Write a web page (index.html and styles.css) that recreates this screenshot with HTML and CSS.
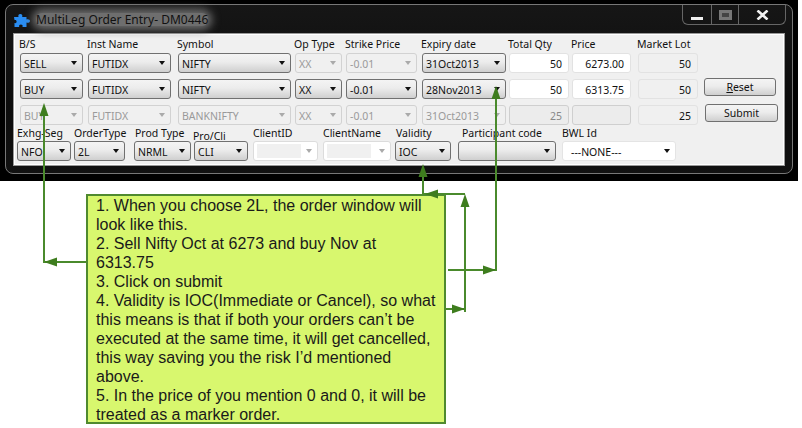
FILE: index.html
```html
<!DOCTYPE html>
<html lang="en">
<head>
    <meta charset="UTF-8">
    <title>MultiLeg Order Entry</title>
    <link rel="stylesheet" href="styles.css">
</head>
<body>
    <div class="stage">
        <div class="window">
            <div class="titlebar">
                <svg class="appicon" width="16" height="14" viewBox="0 0 16 14">
                    <path fill="#2a8df2" d="M0 3h4.500c-.6-1.800.3-3 1.800-3s2.600 1.200 1.900 3h4.300v2.600c1.800-.7 3.500.1 3.500 1.500s-1.700 2.200-3.500 1.500v4.400h-4c.5-1.600-.4-2.400-1.600-2.400s-2.200.8-1.700 2.400h-4.700v-3.900c1.200.5 2.100-.2 2.100-1.500s-.9-2-2.100-1.500z"/>
                </svg>
                <span class="wintitle">MultiLeg Order Entry- DM0446</span>
                <div class="winbtns">
                    <div class="winbtn minbtn"><span class="minbar"></span></div>
                    <div class="winbtn maxbtn"><span class="maxbox"></span></div>
                    <div class="winbtn closebtn">
                        <svg width="13" height="10" viewBox="0 0 13 10"><path d="M1.500 .5l10 9M11.500 .5l-10 9" stroke="#f2f2f2" stroke-width="2.600" fill="none"/></svg>
                    </div>
                </div>
            </div>

            <div class="panel">
                <div class="row labels">
                    <div class="c1">B/S</div>
                    <div class="c2">Inst Name</div>
                    <div class="c3">Symbol</div>
                    <div class="c4">Op Type</div>
                    <div class="c5">Strike Price</div>
                    <div class="c6">Expiry date</div>
                    <div class="c7">Total Qty</div>
                    <div class="c8">Price</div>
                    <div class="c9">Market Lot</div>
                </div>

                <div class="row">
                    <div class="sel c1">SELL<i></i></div>
                    <div class="sel c2">FUTIDX<i></i></div>
                    <div class="sel c3">NIFTY<i></i></div>
                    <div class="sel off c4">XX<i></i></div>
                    <div class="sel off c5">-0.01<i></i></div>
                    <div class="sel c6">31Oct2013<i></i></div>
                    <div class="num c7">50</div>
                    <div class="num c8">6273.00</div>
                    <div class="num lot c9">50</div>
                </div>

                <div class="row">
                    <div class="sel c1">BUY<i></i></div>
                    <div class="sel c2">FUTIDX<i></i></div>
                    <div class="sel c3">NIFTY<i></i></div>
                    <div class="sel c4">XX<i></i></div>
                    <div class="sel c5">-0.01<i></i></div>
                    <div class="sel c6">28Nov2013<i></i></div>
                    <div class="num c7">50</div>
                    <div class="num c8">6313.75</div>
                    <div class="num lot c9">50</div>
                    <button class="btn resetbtn"><u>R</u>eset</button>
                </div>

                <div class="row">
                    <div class="sel off c1">BUY<i></i></div>
                    <div class="sel off c2">FUTIDX<i></i></div>
                    <div class="sel off c3">BANKNIFTY<i></i></div>
                    <div class="sel off c4">XX<i></i></div>
                    <div class="sel off c5">-0.01<i></i></div>
                    <div class="sel off c6">31Oct2013<i></i></div>
                    <div class="num dis c7">25</div>
                    <div class="num dis c8"></div>
                    <div class="num lot c9">25</div>
                    <button class="btn submitbtn">Submit</button>
                </div>

                <div class="row lower">
                    <div class="field f1"><label>Exhg-Seg</label><div class="sel">NFO<i></i></div></div>
                    <div class="field f2"><label>OrderType</label><div class="sel">2L<i></i></div></div>
                    <div class="field f3"><label>Prod Type</label><div class="sel">NRML<i></i></div></div>
                    <div class="field f4"><label class="lowlabel">Pro/Cli</label><div class="sel">CLI<i></i></div></div>
                    <div class="field f5"><label>ClientID</label><div class="sel blank"><b></b><i></i></div></div>
                    <div class="field f6"><label>ClientName</label><div class="sel blank"><b></b><i></i></div></div>
                    <div class="field f7"><label>Validity</label><div class="sel">IOC<i></i></div></div>
                    <div class="field f8"><label>Participant code</label><div class="sel"><i></i></div></div>
                    <div class="field f9"><label>BWL Id</label><div class="sel white">---NONE---<i></i></div></div>
                </div>
            </div>
        </div>
    </div>

    <div class="note">
        1. When you choose 2L, the order window will look like this.<br>
        2. Sell Nifty Oct at 6273 and buy Nov at 6313.75<br>
        3. Click on submit<br>
        4. Validity is IOC(Immediate or Cancel), so what this means is that if both your orders can’t be executed at the same time, it will get cancelled, this way saving you the risk I’d mentioned above.<br>
        5. In the price of you mention 0 and 0, it will be treated as a marker order.
    </div>

    <!-- arrows drawn over the screenshot -->
    <svg class="arrows" width="802" height="428" viewBox="0 0 802 428">
        <g fill="none" stroke="#4a8a2c" stroke-width="2">
            <path d="M86 262H44V110"/>
            <path d="M448 270H496V92"/>
            <path d="M446 309H465M465 312V200"/>
            <path d="M465 194H423V172"/>
        </g>
        <g fill="#3e7d1e">
            <path d="M44 262l13-4.500v9z"/>
            <path d="M44 103l4.500 13h-9z"/>
            <path d="M496 86l4.500 13h-9z"/>
            <path d="M496 270l-13-4.500v9z"/>
            <path d="M465 194l4.500 13h-9z"/>
            <path d="M465 309l-13-4.500v9z"/>
            <path d="M425 194l13-4.500v9z"/>
            <path d="M423 164l4.500 13h-9z"/>
        </g>
    </svg>
</body>
</html>
```

FILE: styles.css
```css
html, body {
    margin: 0;
    height: 428px;
    overflow: hidden;
    background: #fff;
}

.stage {
    width: 798px;
    height: 181px;
    box-sizing: border-box;
    padding: 4px 0 7px 5px;
    background: #000;
    font-family: "Noto Sans", sans-serif;
    font-size: 10.500px;
    color: #111;
}

.window {
    width: 788px;
    height: 170px;
    box-sizing: border-box;
    border: 1px solid #777;
    border-radius: 8px;
    padding: 0 7px;
    background: linear-gradient(#161616, #0c0c0c 60%, #111);
}

.titlebar {
    height: 28px;
    display: flex;
    align-items: center;
}

.appicon {
    margin: 3px 6px 0 1px;
}

.wintitle {
    font-size: 12px;
    line-height: 13px;
    color: #111;
    margin-top: 1px;
    background: #6e6e6e;
    border-radius: 6px;
    box-shadow: 0 0 9px 4px #6e6e6e;
}

.winbtns {
    margin-left: auto;
    margin-right: -1px;
    align-self: flex-start;
    display: flex;
    height: 19px;
    border: 1px solid #666;
    border-top: none;
    border-radius: 0 0 6px 6px;
}

.winbtn {
    display: flex;
    align-items: center;
    justify-content: center;
    border-left: 1px solid #666;
}

.minbtn {
    width: 28px;
    border-left: none;
}

.maxbtn {
    width: 26px;
}

.closebtn {
    width: 46px;
}

.minbar {
    width: 12px;
    height: 3px;
    margin-top: 7px;
    background: #eee;
}

.maxbox {
    width: 7px;
    height: 4px;
    border: 3px solid #777;
    background: #444;
}

.panel {
    height: 133px;
    box-sizing: border-box;
    border: 1px solid #999;
    background: #f0f0f0;
    padding: 4px 0 0 6px;
    box-shadow: inset 0 0 0 1px #fff;
}

.row {
    display: flex;
    align-items: flex-start;
    margin-bottom: 6px;
}

.labels {
    height: 15px;
    line-height: 13px;
    margin-bottom: 0;
    margin-left: -1px;
}

.c1 { width: 63px; margin-right: 5px; }
.c2 { width: 83px; margin-right: 7px; }
.c3 { width: 113px; margin-right: 4px; }
.c4 { width: 47px; margin-right: 4px; }
.c5 { width: 71px; margin-right: 5px; }
.c6 { width: 84px; margin-right: 3px; }
.c7 { width: 60px; margin-right: 3px; }
.c8 { width: 59px; margin-right: 7px; }
.c9 { width: 60px; margin-right: 6px; }

.sel, .num {
    height: 20px;
    box-sizing: border-box;
    line-height: 20px;
    border-radius: 3px;
}

.sel {
    position: relative;
    padding-left: 3px;
    border: 1px solid #707070;
    background: linear-gradient(#f4f4f4, #ececec 45%, #cfcfcf);
    white-space: nowrap;
}

/* dropdown arrow */
.sel i {
    position: absolute;
    right: 5px;
    top: 7px;
    border-style: solid;
    border-width: 4px 3.500px 0;
    border-color: #111 transparent transparent;
}

.sel.off {
    border-color: #d2d2d2;
    background: #f0f0f0;
    color: #9a9a9a;
}

.sel.off i, .sel.blank i {
    border-top-color: #aaa;
}

.sel.blank {
    border-color: #dcdcdc;
    background: #fff;
}

.sel.blank b {
    display: block;
    width: 44px;
    height: 14px;
    margin-top: 2px;
    background: #f0f0f0;
}

.sel.white {
    border-color: #e4e4e4;
    background: #fff;
    padding-left: 8px;
}

.num {
    border: 1px solid #e2e2e2;
    background: #fff;
    text-align: right;
    padding-right: 6px;
}

.num.lot {
    background: #f0f0f0;
}

.num.dis {
    border-color: #cfcfcf;
    background: #ececec;
    color: #888;
}

.btn {
    height: 18px;
    box-sizing: border-box;
    padding: 0;
    border: 1px solid #707070;
    border-radius: 3px;
    background: linear-gradient(#f4f4f4, #ececec 45%, #cfcfcf);
    font: inherit;
    line-height: 14px;
    color: inherit;
}

.resetbtn {
    width: 72px;
    margin-top: -1px;
}

.submitbtn {
    width: 73px;
    margin: -1px 0 0 1px;
}

.lower {
    margin: -4px 0 0 -3px;
}

.lower label {
    display: block;
    height: 14px;
    line-height: 13px;
    white-space: nowrap;
}

.lower .lowlabel {
    line-height: 18px;
    margin-left: -1px;
}

.f1 { width: 54px; margin-right: 3px; }
.f2 { width: 51px; margin-right: 9px; }
.f3 { width: 57px; margin-right: 3px; }
.f4 { width: 54px; margin-right: 5px; }
.f5 { width: 65px; margin-right: 5px; }
.f6 { width: 68px; margin-right: 4px; }
.f7 { width: 56px; margin-right: 7px; }
.f8 { width: 98px; margin-right: 6px; }
.f9 { width: 114px; }

.f3 label, .f7 label { margin-left: 1px; }
.f8 label { margin-left: 4px; }

.note {
    width: 360px;
    height: 230px;
    box-sizing: border-box;
    margin: 13px 0 0 86px;
    padding: 0 8px;
    border: 2px solid #4f8a2f;
    background: #d8f76e;
    font-family: "Liberation Sans", Arial, sans-serif;
    font-size: 16px;
    line-height: 19px;
    color: #1a1a1a;
}

.arrows {
    position: absolute;
    left: 0;
    top: 0;
    pointer-events: none;
}
```
